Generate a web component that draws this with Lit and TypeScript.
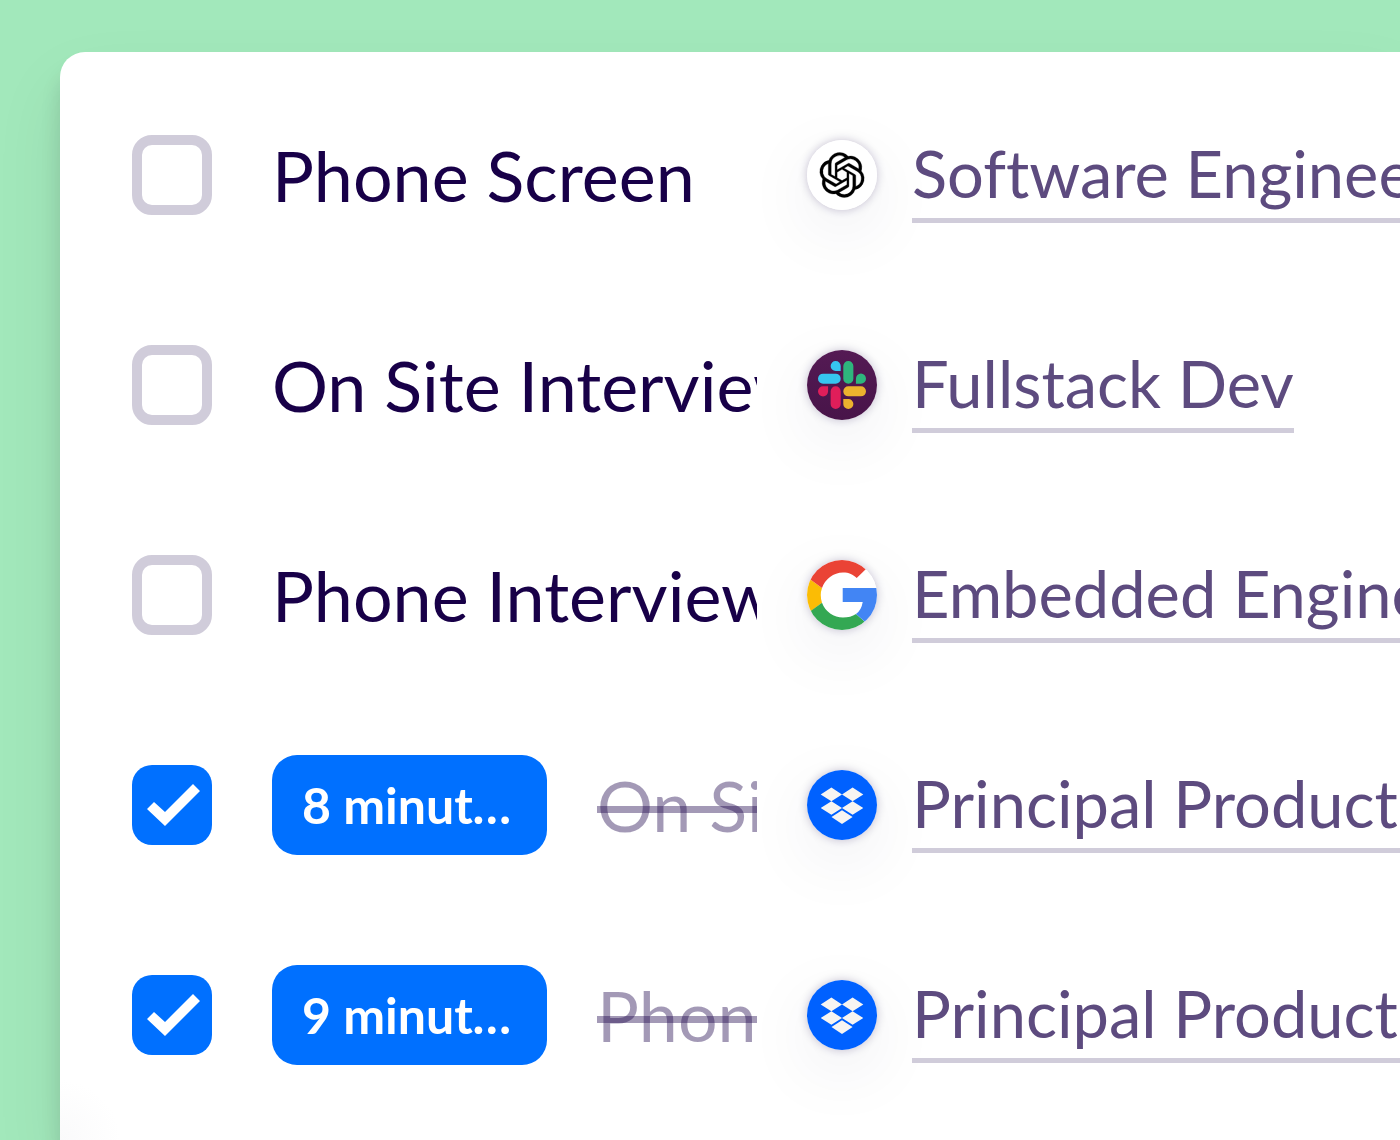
import { LitElement, html, svg, css } from "lit";
import { customElement, property } from "lit/decorators.js";

type Brand = "openai" | "slack" | "google" | "dropbox";

interface Task {
  title: string;
  brand: Brand;
  role: string;
  done: boolean;
  ago?: string;
}

const TASKS: Task[] = [
  { title: "Phone Screen", brand: "openai", role: "Software Engineer", done: false },
  { title: "On Site Interview", brand: "slack", role: "Fullstack Dev", done: false },
  { title: "Phone Interview", brand: "google", role: "Embedded Engineer", done: false },
  { title: "On Site Interview", brand: "dropbox", role: "Principal Product Designer", done: true, ago: "8 minutes ago" },
  { title: "Phone Interview", brand: "dropbox", role: "Principal Product Designer", done: true, ago: "9 minutes ago" },
];

const SLACK_PETAL =
  "M5.042 15.165a2.528 2.528 0 0 1-2.52 2.523A2.528 2.528 0 0 1 0 15.165a2.527 2.527 0 0 1 2.522-2.52h2.52v2.52zM6.313 15.165a2.527 2.527 0 0 1 2.521-2.52 2.527 2.527 0 0 1 2.521 2.52v6.313A2.528 2.528 0 0 1 8.834 24a2.528 2.528 0 0 1-2.521-2.522v-6.313z";

const LOGOS = {
  openai: svg`
    <rect width="70" height="70" fill="#fff"/>
    <g transform="translate(12.5 12.5) scale(1.875)"><path fill="#000" stroke="#000" stroke-width=".15" d="M22.2819 9.8211a5.9847 5.9847 0 0 0-.5157-4.9108 6.0462 6.0462 0 0 0-6.5098-2.9A6.0651 6.0651 0 0 0 4.9807 4.1818a5.9847 5.9847 0 0 0-3.9977 2.9 6.0462 6.0462 0 0 0 .7427 7.0966 5.98 5.98 0 0 0 .511 4.9107 6.051 6.051 0 0 0 6.5146 2.9001A5.9847 5.9847 0 0 0 13.2599 24a6.0557 6.0557 0 0 0 5.7718-4.2058 5.9894 5.9894 0 0 0 3.9977-2.9001 6.0557 6.0557 0 0 0-.7475-7.0729zm-9.022 12.6081a4.4755 4.4755 0 0 1-2.8764-1.0408l.1419-.0804 4.7783-2.7582a.7948.7948 0 0 0 .3927-.6813v-6.7369l2.02 1.1686a.071.071 0 0 1 .038.052v5.5826a4.504 4.504 0 0 1-4.4945 4.4944zm-9.6607-4.1254a4.4708 4.4708 0 0 1-.5346-3.0137l.142.0852 4.783 2.7582a.7712.7712 0 0 0 .7806 0l5.8428-3.3685v2.3324a.0804.0804 0 0 1-.0332.0615L9.74 19.9502a4.4992 4.4992 0 0 1-6.1408-1.6464zM2.3408 7.8956a4.485 4.485 0 0 1 2.3655-1.9728V11.6a.7664.7664 0 0 0 .3879.6765l5.8144 3.3543-2.0201 1.1685a.0757.0757 0 0 1-.071 0l-4.8303-2.7865A4.504 4.504 0 0 1 2.3408 7.872zm16.5963 3.8558L13.1038 8.364 15.1192 7.2a.0757.0757 0 0 1 .071 0l4.8303 2.7913a4.4944 4.4944 0 0 1-.6765 8.1042v-5.6772a.79.79 0 0 0-.407-.667zm2.0107-3.0231l-.142-.0852-4.7735-2.7818a.7759.7759 0 0 0-.7854 0L9.409 9.2297V6.8974a.0662.0662 0 0 1 .0284-.0615l4.8303-2.7866a4.4992 4.4992 0 0 1 6.6802 4.66zM8.3065 12.863l-2.02-1.1638a.0804.0804 0 0 1-.038-.0567V6.0742a4.4992 4.4992 0 0 1 7.3757-3.4537l-.142.0805L8.704 5.459a.7948.7948 0 0 0-.3927.6813zm1.0976-2.3654l2.602-1.4998 2.6069 1.4998v2.9994l-2.5974 1.4997-2.6067-1.4997Z"/></g>`,
  slack: svg`
    <defs><linearGradient id="plum" x1="0" y1="0" x2="0" y2="1">
      <stop offset="0" stop-color="#541a54"/><stop offset="1" stop-color="#481449"/>
    </linearGradient></defs>
    <rect width="70" height="70" fill="url(#plum)"/>
    <g transform="translate(11 11) scale(2)">
      <path fill="#e01e5a" d=${SLACK_PETAL}/>
      <path fill="#36c5f0" d=${SLACK_PETAL} transform="rotate(90 12 12)"/>
      <path fill="#2eb67d" d=${SLACK_PETAL} transform="rotate(180 12 12)"/>
      <path fill="#ecb22e" d=${SLACK_PETAL} transform="rotate(270 12 12)"/>
    </g>`,
  google: svg`
    <rect width="70" height="70" fill="#fff"/>
    <path fill="#fbbc05" d="M0 17 3.7 19.7 15 28Q12.500 35 15 42.700L4 51 0 54Z"/>
    <path fill="#ea4335" d="M3.700 19.700 15 28A22.500 22.500 0 0 1 36 12.500C42 12.500 46 14.500 49.700 18L59 9V0H0V17Z"/>
    <path fill="#34a853" d="M4 50.700 15 42.700A22.500 22.500 0 0 0 36 57.500C41 57.500 45.500 56.500 49 54L57.500 61.500V70H0V53.600Z"/>
    <path fill="#4285f4" d="M35.700 28H70V70H66L57.300 61.300 49 54Q54.500 50 55.700 42H35.700Z"/>`,
  dropbox: svg`
    <rect width="70" height="70" fill="#0061ff"/>
    <path fill="#f7f5f2" d="M13.700 24.400 24.400 17.600 35 24.400 24.400 31.200ZM35 24.400 45.600 17.600 56.300 24.400 45.600 31.200ZM13.700 38 24.400 31.200 35 38 24.400 44.800ZM35 38 45.600 31.200 56.300 38 45.600 44.800ZM24.500 47.100 35 40.300 45.600 47.100 35 53.900Z"/>`,
};

@customElement("company-logo")
export class CompanyLogo extends LitElement {
  @property() brand: Brand = "openai";

  static styles = css`
    :host {
      display: block;
      width: 70px;
      height: 70px;
      border-radius: 50%;
      box-shadow: 0 0 10px rgba(24, 0, 72, 0.24), 0 20px 70px rgba(24, 0, 72, 0.08);
    }
    .logo {
      display: block;
      width: 100%;
      height: 100%;
      border-radius: 50%;
    }
  `;

  render() {
    return html`<svg class="logo" viewBox="0 0 70 70" aria-hidden="true">${LOGOS[this.brand]}</svg>`;
  }
}

@customElement("app-root")
export class AppRoot extends LitElement {
  static styles = css`
    :host {
      display: block;
      font-family: Lato, "Liberation Sans", sans-serif;
      font-variant-ligatures: none;
      color: #180048;
    }
    .page {
      box-sizing: border-box;
      display: flex;
      min-height: 100vh;
      padding: 52px 0 0 60px;
      overflow: hidden;
      background: #a2e8bb;
    }
    .card {
      flex: 1;
      min-width: 0;
      padding: 18px 0 0 72px;
      overflow: hidden;
      border-top-left-radius: 25px;
      background: radial-gradient(circle at 0 100%, #fafafb, #fff 60px);
      box-shadow: 0 20px 20px rgba(0, 0, 0, 0.12), 0 35px 70px rgba(0, 0, 0, 0.08);
    }
    .list {
      margin: 0;
      padding: 0;
      list-style: none;
    }
    .row {
      display: grid;
      grid-template-columns: 80px minmax(0, 595px) 70px minmax(0, 1fr);
      align-items: center;
      min-height: 210px;
    }
    .check {
      appearance: none;
      box-sizing: border-box;
      width: 80px;
      height: 80px;
      margin: 0;
      border: 10px solid #d0ccda;
      border-radius: 20px;
      background: #fff;
      cursor: pointer;
    }
    .check:checked {
      border: 0;
      background: #0070ff;
    }
    .check:checked::before {
      content: "";
      display: block;
      width: 80px;
      height: 80px;
      background: #fff;
      clip-path: polygon(15px 44px, 22px 37px, 33px 47px, 61px 19px, 68px 26px, 33px 61px);
    }
    .task {
      display: flex;
      align-items: center;
      gap: 50px;
      min-width: 0;
      padding: 0 50px 0 60px;
    }
    .badge {
      box-sizing: border-box;
      flex: none;
      width: 275px;
      padding: 0 30px;
      overflow: hidden;
      border-radius: 25px;
      background: #0070ff;
      color: #fff;
      font-size: 50px;
      font-weight: 700;
      line-height: 100px;
      text-overflow: ellipsis;
      white-space: nowrap;
    }
    .title {
      flex: 1;
      min-width: 0;
      overflow: hidden;
      font-size: 70px;
      line-height: 84px;
      white-space: nowrap;
    }
    .title.done {
      color: rgba(24, 0, 72, 0.4);
      text-decoration: line-through;
      text-decoration-thickness: 7px;
      text-decoration-skip-ink: none;
    }
    .job {
      padding-left: 35px;
      overflow: hidden;
      white-space: nowrap;
    }
    .link {
      display: inline-block;
      vertical-align: top;
      border-bottom: 5px solid #d0ccda;
      color: #5d4b7f;
      font-size: 65px;
      line-height: 90px;
      text-decoration: none;
    }
  `;

  render() {
    return html`
      <main class="page">
        <section class="card">
          <ul class="list">
            ${TASKS.map(
              (task, i) => html`
                <li class="row">
                  <input class="check" type="checkbox" id="task-${i}" .checked=${task.done} />
                  <div class="task">
                    ${task.ago ? html`<span class="badge">${task.ago}</span>` : null}
                    <label class="title ${task.done ? "done" : ""}" for="task-${i}">${task.title}</label>
                  </div>
                  <company-logo brand=${task.brand}></company-logo>
                  <div class="job"><a class="link" href="#">${task.role}</a></div>
                </li>
              `,
            )}
          </ul>
        </section>
      </main>
    `;
  }
}
